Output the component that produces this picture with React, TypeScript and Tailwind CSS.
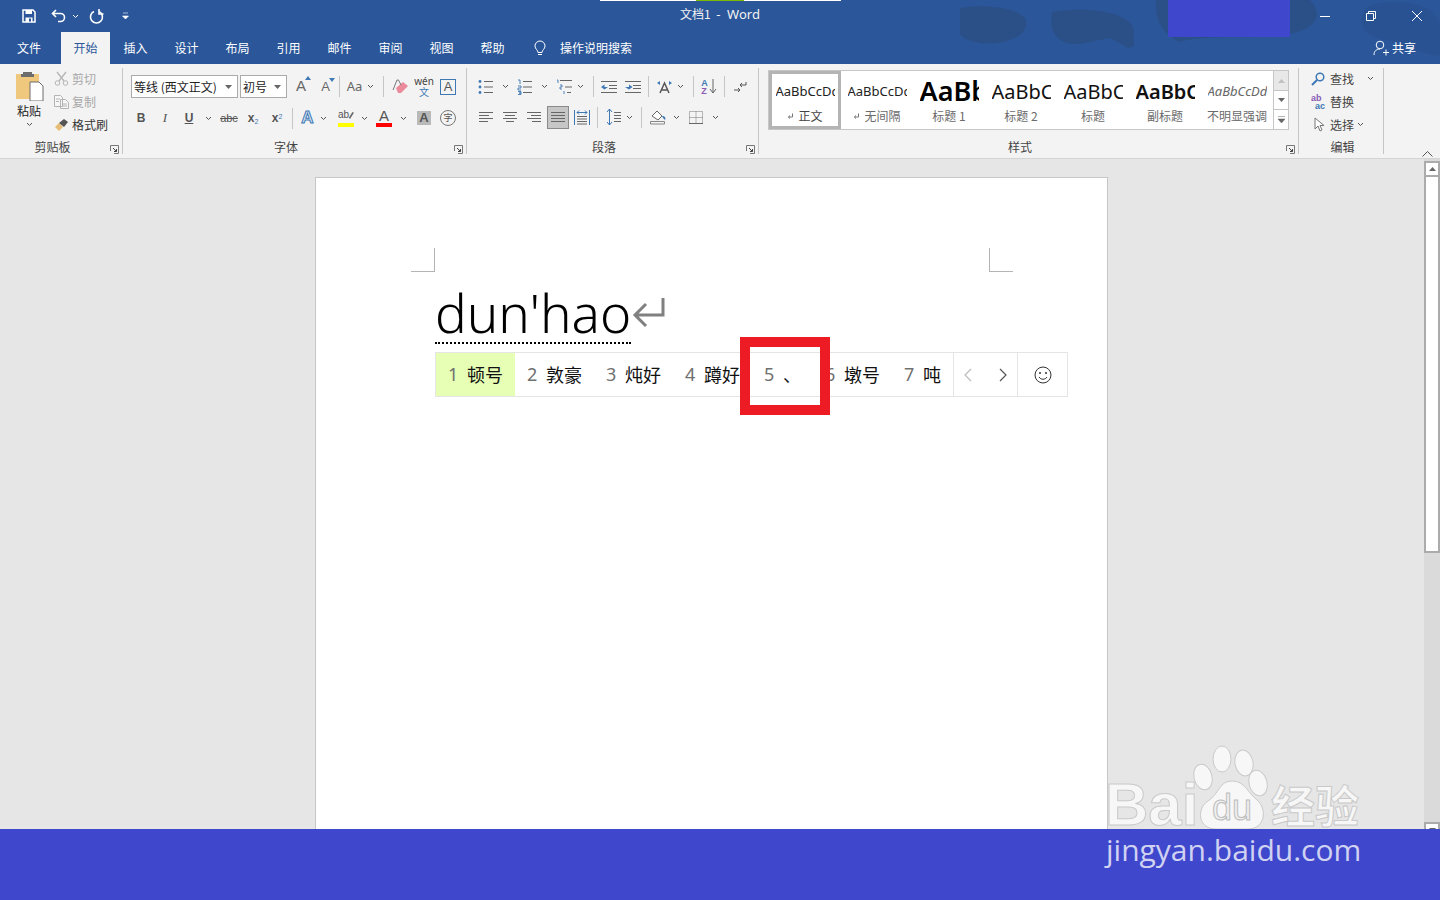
import type { ReactNode } from "react";

const cjk = "font-['Noto_Sans_CJK_SC','Noto_Sans',sans-serif]";

function Chev({ className = "" }: { className?: string }) {
  return (
    <svg width="7" height="5" viewBox="0 0 7 5" className={className}>
      <path d="M1 1l2.5 2.5L6 1" fill="none" stroke="#555" strokeWidth="1" />
    </svg>
  );
}

function Slot({ w, children }: { w: number; children?: ReactNode }) {
  return (
    <div className="flex h-full shrink-0 items-center justify-center" style={{ width: w }}>
      {children}
    </div>
  );
}

function Sep() {
  return (
    <div className="flex h-full w-[7px] shrink-0 items-center justify-center">
      <div className="h-[21px] w-px bg-[#c6c6c6]" />
    </div>
  );
}

function Launcher() {
  return (
    <svg width="9" height="9" viewBox="0 0 9 9" className="mt-1">
      <path d="M.5 6V.5H8.5V8.5H4" fill="none" stroke="#777" />
      <path d="M3 3l3.5 3.5M6.5 4v2.500H4" fill="none" stroke="#444" />
    </svg>
  );
}

function Group({
  w,
  label,
  launcher = true,
  children,
}: {
  w: number;
  label: string;
  launcher?: boolean;
  children: ReactNode;
}) {
  return (
    <div className="flex h-[86px] shrink-0 flex-col border-r border-[#c6c6c6]" style={{ width: w }}>
      <div className="h-[70px]">{children}</div>
      <div className="grid h-[16px] grid-cols-[1fr_auto_1fr] items-center pr-[3px] pt-[1px] text-[12px] leading-4 text-[#444]">
        <span />
        <span className={launcher ? "mr-[14px]" : "ml-[6px]"}>{label}</span>
        <span className="flex justify-end">{launcher && <Launcher />}</span>
      </div>
    </div>
  );
}

function Lines({ kind }: { kind: "l" | "c" | "r" | "j" }) {
  const d = {
    l: "M0 1.500h14M0 4.500h10M0 7.500h14M0 10.500h9",
    c: "M0 1.500h14M2 4.500h10M0 7.500h14M3 10.500h8",
    r: "M0 1.500h14M4 4.500h10M0 7.500h14M5 10.500h9",
    j: "M0 1.500h14M0 4.500h14M0 7.500h14M0 10.500h14",
  }[kind];
  return (
    <svg width="14" height="12" viewBox="0 0 14 12">
      <path d={d} stroke="#666" fill="none" />
    </svg>
  );
}

function ListIcon({ kind }: { kind: "b" | "n" | "m" }) {
  return (
    <svg width="16" height="16" viewBox="0 0 16 16">
      {kind === "b" && (
        <g fill="#3f79b5">
          <circle cx="2" cy="2.500" r="1.400" />
          <circle cx="2" cy="8" r="1.400" />
          <circle cx="2" cy="13.500" r="1.400" />
        </g>
      )}
      {kind === "n" && <path d="M1 1h2v4M1 7h3v2H1v2h3M1 12.500h3v1.500H2h2v1.500H1" fill="none" stroke="#3f79b5" strokeWidth=".9" />}
      {kind === "m" && <path d="M1 1h1v3M4 6h2v2H4v2h2M8 12v3" fill="none" stroke="#3f79b5" strokeWidth=".9" />}
      {kind === "m" ? (
        <path d="M4 1.500h12M9 8h7M11 13.500h4" stroke="#666" fill="none" />
      ) : (
        <path d="M6 2.500h9M6 8h9M6 13.500h9" stroke="#666" fill="none" />
      )}
    </svg>
  );
}

function Indent({ flip }: { flip?: boolean }) {
  return (
    <svg width="17" height="14" viewBox="0 0 17 14">
      <path d="M0 1.500h16M8 5.500h8M8 8.500h8M0 12.500h16" stroke="#666" fill="none" />
      {flip ? <path d="M0 7h4V4.500L7.500 7 4 9.500z" fill="#3f79b5" /> : <path d="M7 7H3.500V4.500L0 7l3.500 2.500z" fill="#3f79b5" />}
    </svg>
  );
}

function StyleCell({
  sample,
  label,
  sampleClass,
  mark,
  active,
}: {
  sample: string;
  label: string;
  sampleClass: string;
  mark?: boolean;
  active?: boolean;
}) {
  return (
    <div
      className={`flex h-[58px] w-[72px] shrink-0 flex-col items-center ${
        active ? "border-[3px] border-[#b4b4b4] bg-white" : "border-[3px] border-transparent"
      }`}
    >
      <div className="flex h-[32px] w-[59px] items-center overflow-hidden pt-[3px]">
        <span className={`whitespace-nowrap font-['Noto_Sans',sans-serif] ${sampleClass}`}>{sample}</span>
      </div>
      <div className={`flex h-[20px] items-center gap-[4px] text-[12px] ${active ? "text-[#444]" : "text-[#6a6a6a]"}`}>
        {mark && (
          <svg width="7" height="7" viewBox="0 0 7 7">
            <path d="M5.500 .5v3.500H1.500M3 2.500L1.300 4 3 5.500" fill="none" stroke="#777" />
          </svg>
        )}
        <span className="whitespace-nowrap">{label}</span>
      </div>
    </div>
  );
}

function Candidate({ n, word, active }: { n: number; word: string; active?: boolean }) {
  return (
    <div className={`flex h-full shrink-0 items-center gap-2 px-3 ${active ? "bg-[#e6ffb5]" : ""}`}>
      <span className="w-[11px] font-['Noto_Sans',sans-serif] text-[18px] text-[#707070]">{n}</span>
      <span className="text-[18px] text-[#111]">{word}</span>
    </div>
  );
}

function SmallRow({ children }: { children: ReactNode }) {
  return <div className="flex h-[23px] items-center">{children}</div>;
}

function TitleDecor() {
  return (
    <svg className="absolute left-[960px] top-0" width="480" height="64" viewBox="0 0 480 64">
      <g fill="#2b5088">
        <path d="M0 8C20 4 58 6 66 20 70 38 40 46 20 43 8 41 2 38 0 34z" />
        <path d="M92 12C120 6 170 10 174 30V46L168 48 150 38 120 44C100 46 88 34 92 12z" />
        <path d="M196 0H350C362 12 360 28 330 34 300 40 240 34 220 42 204 36 194 20 196 0z" />
      </g>
      <g fill="#2a5090" opacity=".7">
        <path d="M408 6C440-4 476 4 480 24V56C450 52 440 40 424 40 400 36 396 18 408 6z" />
      </g>
    </svg>
  );
}

function Watermark() {
  const stroke = "[-webkit-text-stroke:1px_#c9c9c9]";
  return (
    <>
      <div className="absolute left-[1192px] top-[745px]">
        <svg width="94" height="84" viewBox="0 0 94 84">
          <g fill="#f7f7f7" stroke="#cacaca">
            <ellipse cx="11" cy="32" rx="9" ry="13" transform="rotate(-15 11 32)" />
            <ellipse cx="30" cy="14" rx="9" ry="13" />
            <ellipse cx="52" cy="18" rx="9" ry="13" transform="rotate(-10 52 18)" />
            <ellipse cx="66" cy="38" rx="9" ry="13" transform="rotate(-15 66 38)" />
            <path d="M40 36C53 36 55 47 65 55 75 63 74 84 56 84H24C6 84 4 64 16 56 28 48 27 36 40 36z" />
          </g>
        </svg>
      </div>
      <span className={`absolute left-[1212px] top-[788px] font-['Liberation_Sans',sans-serif] text-[36px] leading-[40px] text-[#efefef] [-webkit-text-stroke:1px_#bdbdbd]`}>
        du
      </span>
      <span className={`absolute left-[1105px] top-[771px] font-['Liberation_Sans',sans-serif] text-[60px] font-bold leading-[68px] text-[#f7f7f7] ${stroke}`}>
        Bai
      </span>
      <span className={`absolute left-[1271px] top-[779px] ${cjk} text-[44px] font-bold leading-[50px] text-[#f7f7f7] ${stroke}`}>
        经验
      </span>
    </>
  );
}

export default function App() {
  const tabs = ["插入", "设计", "布局", "引用", "邮件", "审阅", "视图", "帮助"];

  return (
    <div className={`relative flex h-[900px] w-[1440px] flex-col overflow-hidden bg-[#e6e6e6] ${cjk}`}>
      {/* Title bar and tabs */}
      <header className="relative h-[64px] shrink-0 bg-[#2b579a] text-white">
        <TitleDecor />
        <div className="absolute left-[600px] top-0 flex h-px w-[241px] bg-white">
          <div className="ml-[96px] w-[48px] bg-[#7fba00]" />
        </div>
        <div className="relative grid h-[32px] grid-cols-[1fr_auto_1fr] items-center">
          <div className="flex items-center pl-[22px]">
            <svg width="14" height="14" viewBox="0 0 14 14">
              <path d="M1 1h10l2 2v10H1z" fill="none" stroke="#fff" strokeWidth="1.500" />
              <path d="M3.500 1h6.500v4h-6.500zM3.500 8.500h7v4.500h-7z" fill="#fff" />
              <path d="M7 9.500h2v3H7z" fill="#2b579a" />
            </svg>
            <svg width="16" height="14" viewBox="0 0 16 14" className="ml-[15px]">
              <path d="M5 1L1.500 4.500 5 8M2 4.500h7.500a4 4 0 0 1 0 8H7" fill="none" stroke="#fff" strokeWidth="1.600" />
            </svg>
            <svg width="7" height="5" viewBox="0 0 7 5" className="ml-[5px]">
              <path d="M1 1l2.500 2.500L6 1" fill="none" stroke="#fff" />
            </svg>
            <svg width="15" height="15" viewBox="0 0 15 15" className="ml-[10px]">
              <path d="M5 2.500A6 6 0 1 0 10.500 2.800" fill="none" stroke="#fff" strokeWidth="1.600" />
              <path d="M10 0v5h4.500" fill="none" stroke="#fff" strokeWidth="1.600" />
            </svg>
            <svg width="7" height="8" viewBox="0 0 7 8" className="ml-[18px]">
              <path d="M1 1h5M.5 4h6L3.500 7z" fill="#fff" stroke="#fff" strokeWidth=".6" />
            </svg>
          </div>
          <div className="whitespace-pre pb-[3px] text-[12px] text-[#f2f2f2]">
            文档1{"  "}
            <span className="font-['Noto_Sans',sans-serif] text-[13px]">{"-  Word"}</span>
          </div>
          <div className="flex items-center justify-end">
            <div className="flex w-[46px] justify-center">
              <div className="h-px w-[10px] bg-white" />
            </div>
            <div className="flex w-[46px] justify-center">
              <svg width="10" height="10" viewBox="0 0 10 10">
                <path d="M.5 2.500h7v7h-7zM2.500 2.500v-2h7v7h-2" fill="none" stroke="#fff" />
              </svg>
            </div>
            <div className="flex w-[46px] justify-center">
              <svg width="10" height="10" viewBox="0 0 10 10">
                <path d="M0 0l10 10M10 0L0 10" stroke="#fff" />
              </svg>
            </div>
          </div>
        </div>
        <nav className="relative flex h-[32px] items-center text-[12px] text-white">
          <div className="mr-[3px] flex w-[58px] justify-center">文件</div>
          <div className="flex h-full w-[49px] items-center justify-center bg-[#f3f3f3] text-[#2b579a]">开始</div>
          {tabs.map((t) => (
            <div key={t} className="flex w-[51px] justify-center">
              {t}
            </div>
          ))}
          <svg width="14" height="16" viewBox="0 0 14 16" className="ml-[15px]">
            <path d="M5 12.500C5 10 2 9 2 6a5 5 0 0 1 10 0c0 3-3 4-3 6.500zM5 14.500h4" fill="none" stroke="#fff" />
          </svg>
          <span className="ml-[13px]">操作说明搜索</span>
          <div className="ml-auto flex items-center gap-[3px] pr-[24px]">
            <svg width="16" height="16" viewBox="0 0 16 16">
              <circle cx="7" cy="5" r="3.800" fill="none" stroke="#fff" />
              <path d="M1 15c0-4 2.500-6 6-6M10 12.500h6M13 9.500v6" fill="none" stroke="#fff" />
            </svg>
            <span>共享</span>
          </div>
        </nav>
        <div className="absolute left-[1168px] top-0 h-[37px] w-[122px] bg-[#3f48cc]" />
      </header>

      {/* Ribbon */}
      <section className="relative flex h-[95px] shrink-0 border-b border-[#d4d4d4] bg-[#f3f3f3] pt-[4px] text-[12px] text-[#444]">
        <Group w={123} label="剪贴板">
          <div className="flex">
            <div className="flex w-[54px] flex-col items-center pl-[4px] pt-[3px]">
              <svg width="29" height="30" viewBox="0 0 29 30">
                <path d="M1 3h23v25H1z" fill="#f0c87d" />
                <path d="M8 3h9V1h-9zM6 3h13v3H6z" fill="#6d6d6d" />
                <path d="M15 11h9l4 4v15H15z" fill="#fff" stroke="#6d6d6d" />
              </svg>
              <span className="mt-[1px] text-[12px] leading-[17px] text-[#222]">粘贴</span>
              <Chev className="mt-[3px]" />
            </div>
            <div className="-mt-[1px]">
              <SmallRow>
                <svg width="15" height="15" viewBox="0 0 15 15">
                  <path d="M3 1l7 9M12 1L5 10" stroke="#b4b4b4" strokeWidth="1.300" fill="none" />
                  <circle cx="3.500" cy="12" r="2.300" fill="none" stroke="#b4b4b4" />
                  <circle cx="11.500" cy="12" r="2.300" fill="none" stroke="#b4b4b4" />
                </svg>
                <span className="ml-[3px] text-[#a8a8a8]">剪切</span>
              </SmallRow>
              <SmallRow>
                <svg width="15" height="14" viewBox="0 0 15 14">
                  <path d="M.5.500h6l2 2v9h-8zM6.500 4.500h5l3 3v6h-8zM2 4h4M2 6.500h3M8 9h5M8 11h5" fill="#f7f7f7" stroke="#b4b4b4" />
                </svg>
                <span className="ml-[3px] text-[#a8a8a8]">复制</span>
              </SmallRow>
              <SmallRow>
                <svg width="15" height="14" viewBox="0 0 15 14">
                  <path d="M1 9l4-4 4 4-4 4z" fill="#e6bd75" />
                  <path d="M5 5l5-4 4 3-4 5z" fill="#555" />
                </svg>
                <span className="ml-[3px] text-[#333]">格式刷</span>
              </SmallRow>
            </div>
          </div>
        </Group>

        <Group w={344} label="字体">
          <div className="pl-[8px] pt-[7px]">
            <div className="flex h-[23px] items-center">
              <div className="flex h-full w-[107px] items-center justify-between border border-[#ababab] bg-white pl-[2px] pr-[5px] text-[#222]">
                <span className="whitespace-pre">等线 (西文正文)</span>
                <svg width="7" height="4" viewBox="0 0 7 4">
                  <path d="M0 0h7L3.500 4z" fill="#666" />
                </svg>
              </div>
              <div className="ml-[2px] flex h-full w-[47px] items-center justify-between border border-[#ababab] bg-white pl-[2px] pr-[5px] text-[#222]">
                <span>初号</span>
                <svg width="7" height="4" viewBox="0 0 7 4">
                  <path d="M0 0h7L3.500 4z" fill="#666" />
                </svg>
              </div>
              <Slot w={28}>
                <span className="relative font-['Liberation_Sans',sans-serif] text-[15px] text-[#666]">
                  A
                  <svg width="6" height="4" viewBox="0 0 6 4" className="absolute -right-[5px] top-[1px]">
                    <path d="M0 4h6L3 0z" fill="#3f79b5" />
                  </svg>
                </span>
              </Slot>
              <Slot w={21}>
                <span className="relative font-['Liberation_Sans',sans-serif] text-[13px] text-[#666]">
                  A
                  <svg width="6" height="4" viewBox="0 0 6 4" className="absolute -right-[5px] top-[1px]">
                    <path d="M0 0h6L3 4z" fill="#3f79b5" />
                  </svg>
                </span>
              </Slot>
              <Sep />
              <Slot w={23}>
                <span className="font-['Noto_Sans',sans-serif] text-[13px] text-[#666]">Aa</span>
              </Slot>
              <Slot w={9}>
                <Chev />
              </Slot>
              <Slot w={5} />
              <Sep />
              <Slot w={26}>
                <svg width="17" height="16" viewBox="0 0 17 16">
                  <path d="M4 9l7-6 5 4-7 7H6z" fill="#ea8a9a" />
                  <path d="M1 11L5 1h1.500L9 6" fill="none" stroke="#777" />
                </svg>
              </Slot>
              <Slot w={22}>
                <div className="flex flex-col items-center">
                  <span className="font-['Noto_Sans',sans-serif] text-[10px] leading-[9px] text-[#444]">wén</span>
                  <span className="text-[10px] leading-[11px] text-[#3f79b5]">文</span>
                </div>
              </Slot>
              <Slot w={26}>
                <div className="flex h-[16px] w-[16px] items-center justify-center border border-[#3f79b5] font-['Liberation_Sans',sans-serif] text-[13px] text-[#555]">
                  A
                </div>
              </Slot>
            </div>
            <div className="mt-[8px] flex h-[24px] items-center font-['Liberation_Sans',sans-serif]">
              <Slot w={20}>
                <b className="text-[12px] text-[#555]">B</b>
              </Slot>
              <Slot w={28}>
                <i className="font-['Liberation_Serif',serif] text-[13px] text-[#555]">I</i>
              </Slot>
              <Slot w={20}>
                <b className="text-[12px] text-[#555] underline">U</b>
              </Slot>
              <Slot w={18}>
                <Chev />
              </Slot>
              <Slot w={24}>
                <span className="text-[11px] text-[#555] line-through">abc</span>
              </Slot>
              <Slot w={24}>
                <b className="text-[12px] text-[#555]">
                  x<sub className="text-[7px] font-normal text-[#3f79b5]">2</sub>
                </b>
              </Slot>
              <Slot w={24}>
                <b className="text-[12px] text-[#555]">
                  x<sup className="text-[7px] font-normal text-[#3f79b5]">2</sup>
                </b>
              </Slot>
              <Sep />
              <Slot w={23}>
                <span className="text-[17px] font-bold text-[#dbe7f5] [-webkit-text-stroke:1px_#3f79b5]">A</span>
              </Slot>
              <Slot w={9}>
                <Chev />
              </Slot>
              <Slot w={4} />
              <Slot w={28}>
                <div className="flex flex-col items-center">
                  <div className="flex h-[14px] w-[16px] items-start">
                    <span className="text-[10px] leading-[11px] text-[#555]">ab</span>
                    <svg width="8" height="12" viewBox="0 0 8 12" className="-ml-[1px]">
                      <path d="M1 10L6 2l2 1-5 8z" fill="#666" />
                    </svg>
                  </div>
                  <div className="h-[4px] w-[16px] bg-[#ffff00]" />
                </div>
              </Slot>
              <Slot w={9}>
                <Chev />
              </Slot>
              <Slot w={30}>
                <div className="flex flex-col items-center">
                  <span className="h-[14px] text-[15px] leading-[14px] text-[#555]">A</span>
                  <div className="h-[4px] w-[16px] bg-[#ff0000]" />
                </div>
              </Slot>
              <Slot w={9}>
                <Chev />
              </Slot>
              <Slot w={32}>
                <div className="flex h-[14px] w-[14px] items-center justify-center bg-[#b9b9b9] text-[13px] font-bold text-[#555]">
                  A
                </div>
              </Slot>
              <Slot w={16}>
                <div className={`flex h-[16px] w-[16px] items-center justify-center rounded-full border border-[#777] text-[9px] text-[#555] ${cjk}`}>
                  字
                </div>
              </Slot>
            </div>
          </div>
        </Group>

        <Group w={292} label="段落">
          <div className="pl-[10px] pt-[7px]">
            <div className="flex h-[23px] items-center">
              <Slot w={17}>
                <ListIcon kind="b" />
              </Slot>
              <Slot w={22}>
                <Chev />
              </Slot>
              <Slot w={17}>
                <ListIcon kind="n" />
              </Slot>
              <Slot w={22}>
                <Chev />
              </Slot>
              <Slot w={17}>
                <ListIcon kind="m" />
              </Slot>
              <Slot w={16}>
                <Chev />
              </Slot>
              <Slot w={2} />
              <Sep />
              <Slot w={24}>
                <Indent />
              </Slot>
              <Slot w={24}>
                <Indent flip />
              </Slot>
              <Sep />
              <Slot w={24}>
                <svg width="17" height="14" viewBox="0 0 17 14">
                  <path d="M4 13L8.500 3 13 13M6 10h5" fill="none" stroke="#555" strokeWidth="1.500" />
                  <path d="M1 3l3-2v4zM16 3l-3-2v4z" fill="#3f79b5" />
                </svg>
              </Slot>
              <Slot w={8}>
                <Chev />
              </Slot>
              <Slot w={6} />
              <Sep />
              <Slot w={24}>
                <div className="flex items-center font-['Liberation_Sans',sans-serif] text-[9px] font-bold leading-[8px]">
                  <div className="flex flex-col">
                    <span className="text-[#3f79b5]">A</span>
                    <span className="text-[#8a5bb5]">Z</span>
                  </div>
                  <svg width="8" height="15" viewBox="0 0 8 15" className="ml-[1px]">
                    <path d="M4 0v14M1 10l3 4 3-4" fill="none" stroke="#666" />
                  </svg>
                </div>
              </Slot>
              <Sep />
              <Slot w={24}>
                <svg width="14" height="12" viewBox="0 0 14 12">
                  <path d="M13 1v3H7M9 2L7 4l2 2M1 9h6M5 7l2 2-2 2" fill="none" stroke="#555" />
                </svg>
              </Slot>
            </div>
            <div className="mt-[7px] flex h-[24px] items-center">
              <Slot w={2} />
              <Slot w={14}>
                <Lines kind="l" />
              </Slot>
              <Slot w={10} />
              <Slot w={14}>
                <Lines kind="c" />
              </Slot>
              <Slot w={10} />
              <Slot w={14}>
                <Lines kind="r" />
              </Slot>
              <Slot w={6} />
              <div className="flex h-[23px] w-[22px] items-center justify-center border border-[#8a8a8a] bg-[#c6c6c6]">
                <Lines kind="j" />
              </div>
              <Slot w={25}>
                <svg width="16" height="15" viewBox="0 0 16 15">
                  <path d="M.5 0v15M15.500 0v15" stroke="#3f79b5" />
                  <path d="M3 2.500h10M3 2.500l2-2M3 2.500l2 2M13 2.500l-2-2M13 2.500l-2 2" stroke="#3f79b5" fill="none" />
                  <path d="M3 6.500h10M3 9h10M3 11.500h10M3 14h10" stroke="#666" />
                </svg>
              </Slot>
              <Sep />
              <Slot w={24}>
                <svg width="15" height="16" viewBox="0 0 15 16">
                  <path d="M3.500 0v16M1 3l2.500-3L6 3M1 13l2.500 3L6 13" fill="none" stroke="#3f79b5" />
                  <path d="M8 3.500h7M8 6.500h7M8 9.500h7M8 12.500h7" stroke="#666" />
                </svg>
              </Slot>
              <Slot w={8}>
                <Chev />
              </Slot>
              <Slot w={5} />
              <Sep />
              <Slot w={26}>
                <svg width="17" height="16" viewBox="0 0 17 16">
                  <path d="M2 7l5-5 5 5-4 4z" fill="#fff" stroke="#666" />
                  <path d="M12 7c3 0 4 2 3 4l-2-2z" fill="#3f79b5" />
                  <path d="M.5 12.500h14v2.500H.5z" fill="#f3f3f3" stroke="#888" />
                </svg>
              </Slot>
              <Slot w={10}>
                <Chev />
              </Slot>
              <Slot w={30}>
                <svg width="14" height="13" viewBox="0 0 14 13">
                  <path d="M.5.500h13v12H.5zM7 .5v12M.5 6.500h13" fill="none" stroke="#777" strokeDasharray="1 1" />
                  <path d="M0 12.500h14" stroke="#666" />
                </svg>
              </Slot>
              <Slot w={8}>
                <Chev />
              </Slot>
            </div>
          </div>
        </Group>

        <Group w={540} label="样式">
          <div className="flex pl-[9px] pt-[2px]">
            <div className="flex h-[60px] w-[521px] border border-[#c6c6c6] bg-white">
              <div className="flex flex-1 overflow-hidden">
                <StyleCell active mark sample="AaBbCcDd" label="正文" sampleClass="text-[13px] text-[#222]" />
                <StyleCell mark sample="AaBbCcDd" label="无间隔" sampleClass="text-[13px] text-[#222]" />
                <StyleCell sample="AaBbCcD" label="标题 1" sampleClass="text-[27px] font-semibold text-black" />
                <StyleCell sample="AaBbCcD" label="标题 2" sampleClass="text-[20px] text-[#111]" />
                <StyleCell sample="AaBbCcD" label="标题" sampleClass="text-[20px] text-[#111]" />
                <StyleCell sample="AaBbCcD" label="副标题" sampleClass="text-[20px] font-semibold text-[#111]" />
                <StyleCell sample="AaBbCcDd" label="不明显强调" sampleClass="text-[13px] italic text-[#666]" />
              </div>
              <div className="flex w-[15px] shrink-0 flex-col border-l border-[#c6c6c6]">
                <div className="flex h-[20px] items-center justify-center border-b border-[#c6c6c6] bg-[#e8e8e8]">
                  <svg width="7" height="4" viewBox="0 0 7 4">
                    <path d="M0 4h7L3.500 0z" fill="#c0c0c0" />
                  </svg>
                </div>
                <div className="flex h-[19px] items-center justify-center border-b border-[#c6c6c6]">
                  <svg width="7" height="4" viewBox="0 0 7 4">
                    <path d="M0 0h7L3.500 4z" fill="#666" />
                  </svg>
                </div>
                <div className="flex flex-1 items-center justify-center">
                  <svg width="7" height="7" viewBox="0 0 7 7">
                    <path d="M0 .5h7M0 3h7L3.500 7z" fill="#666" stroke="#666" strokeWidth=".5" />
                  </svg>
                </div>
              </div>
            </div>
          </div>
        </Group>

        <Group w={85} label="编辑" launcher={false}>
          <div className="-mt-[1px] pl-[12px] text-[#444]">
            <SmallRow>
              <svg width="14" height="14" viewBox="0 0 14 14">
                <circle cx="9" cy="5" r="3.800" fill="none" stroke="#3f79b5" strokeWidth="1.500" />
                <path d="M6 8l-5 5" stroke="#3f79b5" strokeWidth="2" />
              </svg>
              <span className="ml-[5px]">查找</span>
              <Chev className="ml-[13px]" />
            </SmallRow>
            <SmallRow>
              <div className="flex w-[15px] flex-col font-['Liberation_Sans',sans-serif] text-[9px] font-bold leading-[8px]">
                <span className="text-[#8a5bb5]">ab</span>
                <span className="pl-[4px] text-[#3f79b5]">ac</span>
              </div>
              <span className="ml-[4px]">替换</span>
            </SmallRow>
            <SmallRow>
              <svg width="14" height="15" viewBox="0 0 14 15" className="ml-[1px]">
                <path d="M3 1v11l3-3 2 5 2-1-2-4.500h4z" fill="#fff" stroke="#777" />
              </svg>
              <span className="ml-[4px]">选择</span>
              <Chev className="ml-[3px]" />
            </SmallRow>
          </div>
        </Group>

        <div className="flex flex-1 items-end justify-end pb-[1px] pr-[7px]">
          <svg width="11" height="6" viewBox="0 0 11 6">
            <path d="M.5 5.500l5-5 5 5" fill="none" stroke="#555" />
          </svg>
        </div>
      </section>

      {/* Document */}
      <main className="flex min-h-0 flex-1 overflow-hidden">
        <div className="flex-1 overflow-hidden pl-[315px] pt-[18px]">
          <div className="h-[900px] w-[793px] border border-[#c6c6c6] bg-white pl-[95px] pr-[94px] pt-[70px]">
            <div className="flex justify-between">
              <div className="h-6 w-6 border-b border-r border-[#b4b4b4]" />
              <div className="h-6 w-6 border-b border-l border-[#b4b4b4]" />
            </div>
            <div className="ml-[24px] mt-[11px] flex h-[60px] items-center">
              <span className="border-b-2 border-dotted border-black font-['Noto_Sans',sans-serif] text-[53px] font-light leading-[59px] text-black">
                dun'hao
              </span>
              <svg width="33" height="30" viewBox="0 0 33 30" className="ml-px">
                <path d="M31 0v17H3M14 6L3 17l11 11" fill="none" stroke="#808080" strokeWidth="3" />
              </svg>
            </div>
            <div className="ml-[24px] mt-[9px] flex h-[45px] w-[633px] items-center border border-[#e5e5e5] bg-white">
              <Candidate active n={1} word="顿号" />
              <Candidate n={2} word="敦豪" />
              <Candidate n={3} word="炖好" />
              <Candidate n={4} word="蹲好" />
              <Candidate n={5} word="、" />
              <Candidate n={6} word="墩号" />
              <Candidate n={7} word="吨" />
              <div className="flex h-full w-[65px] items-center justify-between border-x border-[#e5e5e5] px-[10px]">
                <svg width="8" height="14" viewBox="0 0 8 14">
                  <path d="M7 1L1 7l6 6" fill="none" stroke="#bbb" strokeWidth="1.200" />
                </svg>
                <svg width="8" height="14" viewBox="0 0 8 14">
                  <path d="M1 1l6 6-6 6" fill="none" stroke="#555" strokeWidth="1.200" />
                </svg>
              </div>
              <div className="flex flex-1 justify-center">
                <svg width="18" height="18" viewBox="0 0 18 18">
                  <circle cx="9" cy="9" r="8" fill="none" stroke="#333" />
                  <circle cx="6" cy="7" r="1" fill="#333" />
                  <circle cx="12" cy="7" r="1" fill="#333" />
                  <path d="M5 11c2 3 6 3 8 0" fill="none" stroke="#333" />
                </svg>
              </div>
            </div>
          </div>
        </div>
        <aside className="flex w-[16px] shrink-0 flex-col bg-[#dadada] pt-[2px]">
          <div className="flex h-[16px] shrink-0 items-center justify-center border-2 border-[#ababab] bg-white">
            <svg width="7" height="4" viewBox="0 0 7 4">
              <path d="M0 4h7L3.500 0z" fill="#666" />
            </svg>
          </div>
          <div className="h-[376px] shrink-0 border-x-2 border-b-2 border-[#ababab] bg-white" />
          <div className="flex-1" />
          <div className="-mb-[9px] flex h-[16px] shrink-0 items-center justify-center border-2 border-[#ababab] bg-white">
            <svg width="7" height="4" viewBox="0 0 7 4">
              <path d="M0 0h7L3.500 4z" fill="#666" />
            </svg>
          </div>
        </aside>
      </main>

      {/* Bottom band */}
      <footer className="flex h-[71px] shrink-0 items-start bg-[#3f48cc] pl-[1106px]">
        <span className="font-['Open_Sans',sans-serif] text-[30px] leading-[42px] text-[#d0d2f2]">jingyan.baidu.com</span>
      </footer>

      {/* Overlays */}
      <div className="absolute left-[740px] top-[337px] h-[78px] w-[90px] border-[10px] border-[#ed1c24]" />
      <Watermark />
    </div>
  );
}
